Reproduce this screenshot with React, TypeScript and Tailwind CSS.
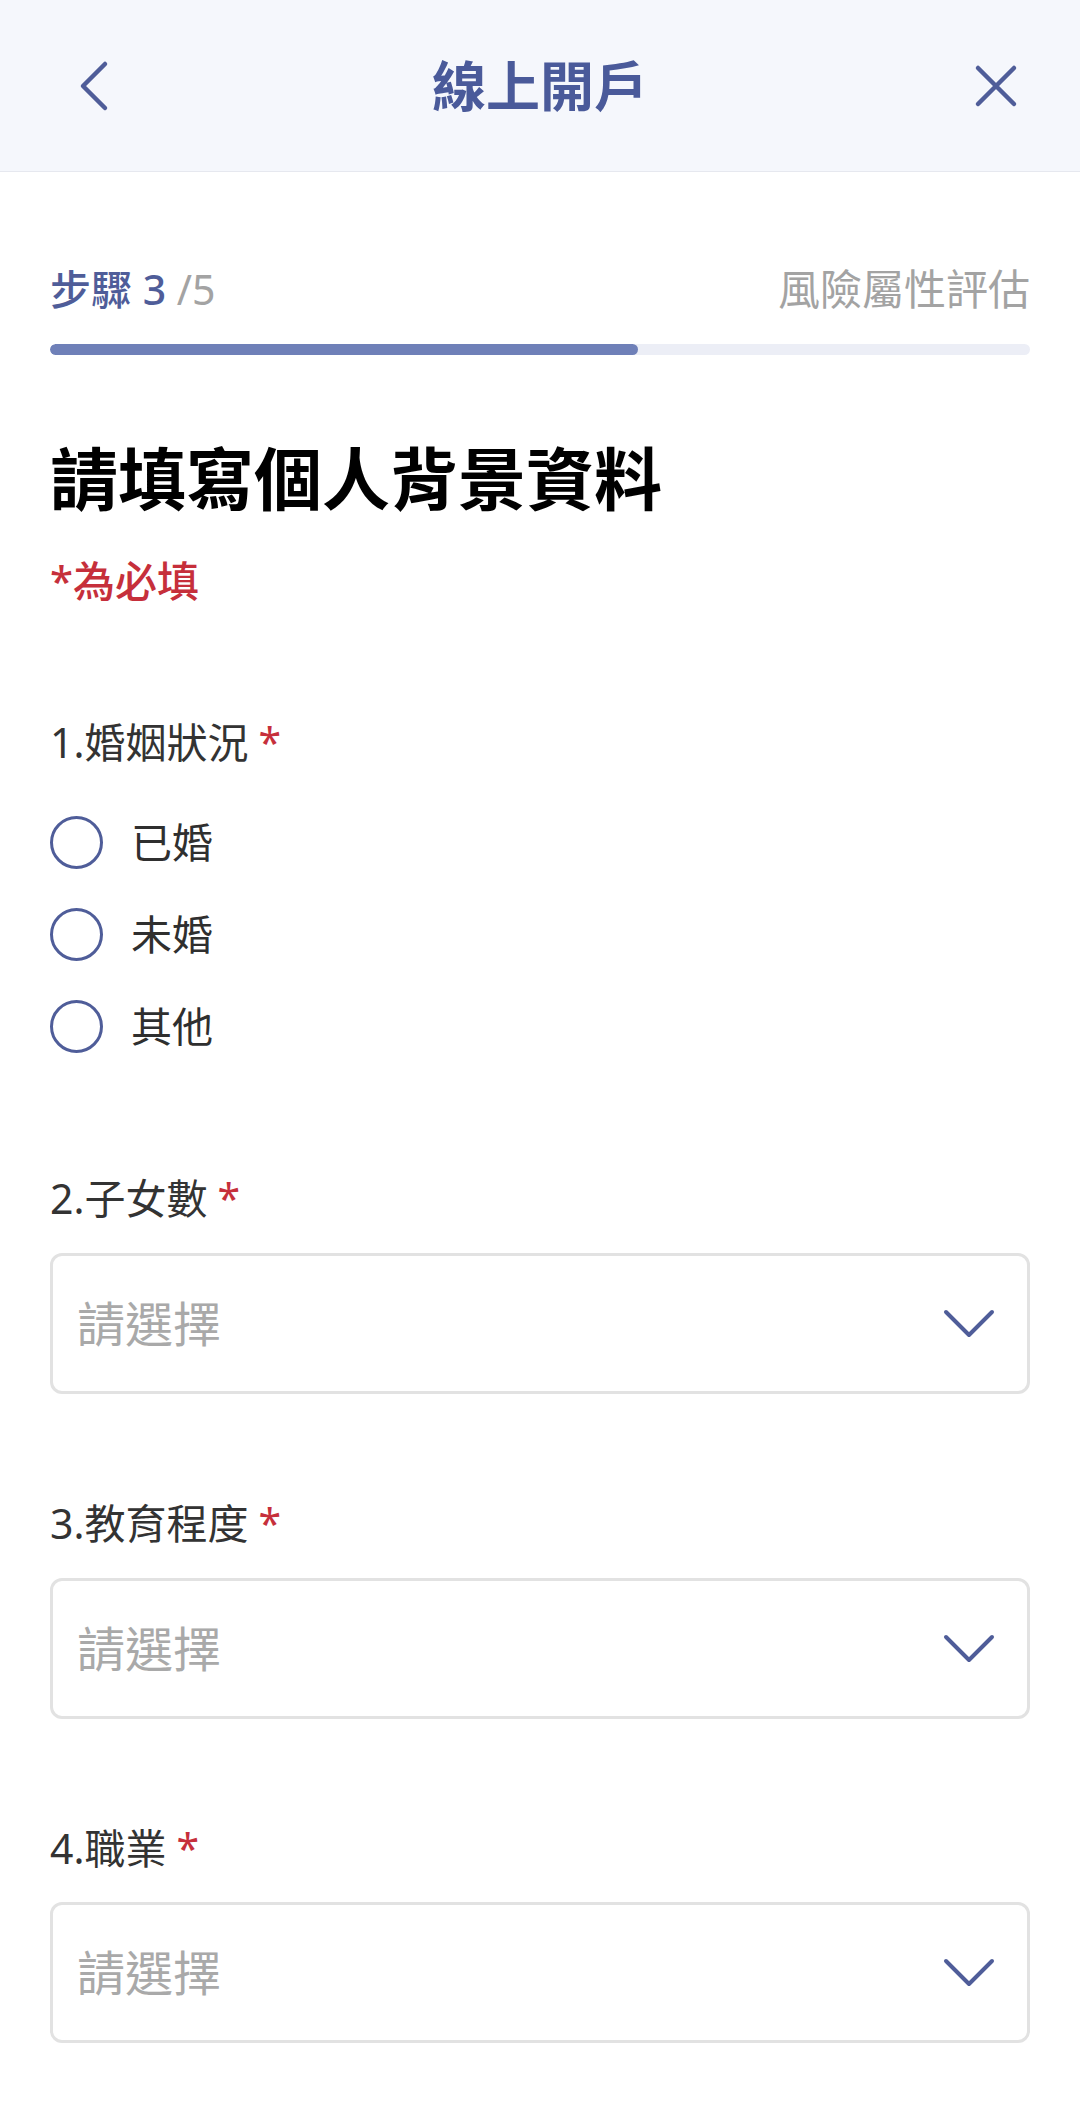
import React from 'react';

const font = { fontFamily: '"Noto Sans", "Noto Sans CJK TC", sans-serif' };

const Required = () => <span className="text-[#c62f3b] ml-[10px]">*</span>;

const SelectBox: React.FC<{ placeholder: string }> = ({ placeholder }) => (
    <div className="h-[141px] w-full rounded-[12px] border-[3px] border-[#e2e2e2] flex items-center justify-between pl-[24px] pr-[32px]">
        <span className="text-[48px] leading-none text-[#a9a9a9]">{placeholder}</span>
        <svg width="52" height="30" viewBox="0 0 52 30" fill="none">
            <path d="M3 3 L26 26 L49 3" stroke="#4f5d99" strokeWidth="4" strokeLinecap="round" strokeLinejoin="round"/>
        </svg>
    </div>
);

const Radio: React.FC<{ label: string }> = ({ label }) => (
    <div className="h-[92px] flex items-center">
        <div className="size-[53px] rounded-full border-[3.5px] border-[#4f5d99]"></div>
        <span className="ml-[28px] text-[41px] leading-none text-[#2f2f2f]">{label}</span>
    </div>
);

const Question: React.FC<{ label: string; mt: string; children: React.ReactNode; gap: string }> = ({ label, mt, children, gap }) => (
    <div className={mt}>
        <div className="h-[60px] flex items-center text-[41px] text-[#333333]">
            {label}<Required/>
        </div>
        <div className={gap}>{children}</div>
    </div>
);

export default function App() {
    return (
        <div className="w-[1080px] min-h-[2107px] bg-white" style={font}>
            <header className="h-[172px] bg-[#f5f7fc] border-b border-[#e6e8ef] grid grid-cols-[1fr_auto_1fr] items-center pl-[75px] pr-[62px]">
                <div className="flex justify-start">
                    <svg width="36" height="52" viewBox="0 0 36 52" fill="none">
                        <path d="M30 4 L8 26 L30 48" stroke="#4f5d99" strokeWidth="4.5" strokeLinecap="round" strokeLinejoin="round"/>
                    </svg>
                </div>
                <h1 className="text-[54px] font-bold text-[#4a5a9a] leading-none -ml-[13px]">線上開戶</h1>
                <div className="flex justify-end">
                    <svg width="44" height="44" viewBox="0 0 44 44" fill="none">
                        <path d="M4 4 L40 40 M40 4 L4 40" stroke="#4f5d99" strokeWidth="4.5" strokeLinecap="round"/>
                    </svg>
                </div>
            </header>

            <main className="px-[50px]">
                <div className="mt-[89px] h-[56px] flex items-center justify-between">
                    <div className="text-[41px] leading-none">
                        <span className="text-[#4f5d99] font-medium">步驟 3</span>
                        <span className="text-[#a3a3a3]"> /5</span>
                    </div>
                    <span className="text-[42px] leading-none text-[#a3a3a3]">風險屬性評估</span>
                </div>

                <div className="mt-[27px] h-[11px] w-full rounded-full bg-[#eceef6] overflow-hidden">
                    <div className="h-full w-[60%] rounded-full bg-[#6f80b8]"></div>
                </div>

                <h2 className="mt-[79px] h-[90px] flex items-center text-[68px] font-bold text-black leading-none">請填寫個人背景資料</h2>
                <p className="mt-[27px] h-[60px] flex items-center text-[42px] font-medium text-[#c62f3b] leading-none">*為必填</p>

                <Question label="1.婚姻狀況" mt="mt-[102px]" gap="mt-[23px]">
                    <Radio label="已婚"/>
                    <Radio label="未婚"/>
                    <Radio label="其他"/>
                </Question>

                <Question label="2.子女數" mt="mt-[97px]" gap="mt-[24px]">
                    <SelectBox placeholder="請選擇"/>
                </Question>

                <Question label="3.教育程度" mt="mt-[100px]" gap="mt-[24px]">
                    <SelectBox placeholder="請選擇"/>
                </Question>

                <Question label="4.職業" mt="mt-[100px]" gap="mt-[23px]">
                    <SelectBox placeholder="請選擇"/>
                </Question>
            </main>
        </div>
    );
}
